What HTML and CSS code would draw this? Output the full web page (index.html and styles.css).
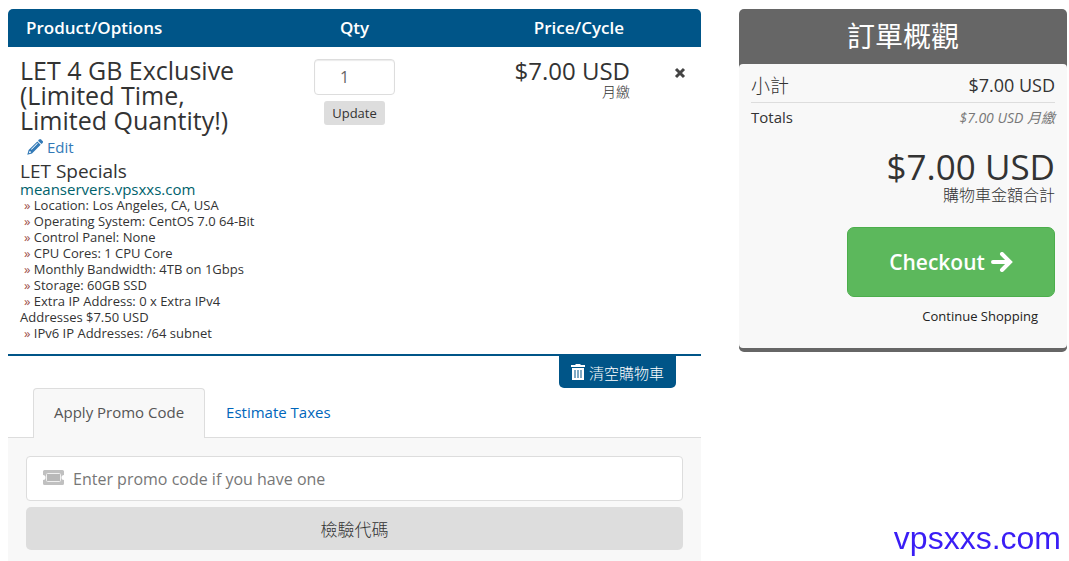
FILE: index.html
```html
<!DOCTYPE html>
<html lang="zh-Hant">
  <head>
    <meta charset="utf-8" />
    <meta name="viewport" content="width=device-width, initial-scale=1" />
    <title>Shopping Cart</title>
    <link rel="stylesheet" href="styles.css">
  </head>
  <body>
    <div class="page">
      <main class="cart">
        <!-- Cart items -->
        <table class="cart-table">
          <thead>
            <tr>
              <th class="col-product">Product/Options</th>
              <th class="col-qty">Qty</th>
              <th class="col-price">Price/Cycle</th>
              <th class="col-remove"></th>
            </tr>
          </thead>
          <tbody>
            <tr>
              <td class="col-product">
                <div class="item-title">LET 4 GB Exclusive (Limited Time, Limited Quantity!)</div>
                <a href="#" class="item-edit">
                  <svg width="16" height="16" viewBox="0 0 16 16" fill="currentColor" aria-hidden="true">
                    <path d="M11 1.700 12.200.5a1.300 1.300 0 0 1 1.800 0l1.600 1.600a1.300 1.300 0 0 1 0 1.800l-1.200 1.200z" />
                    <path fill-rule="evenodd" d="M10.300 2.400 13.700 5.800 5 14.500.3 15.800 1.600 11.100zM2.500 12l-.7 2.300 2.300-.7-.3-1.200-1-.1zM10.200 4 4 10.200l.6.6 6.200-6.200z" />
                  </svg>
                  Edit
                </a>
                <div class="item-group">LET Specials</div>
                <div class="item-domain">meanservers.vpsxxs.com</div>
                <ul class="item-options">
                  <li>Location: Los Angeles, CA, USA</li>
                  <li>Operating System: CentOS 7.0 64-Bit</li>
                  <li>Control Panel: None</li>
                  <li>CPU Cores: 1 CPU Core</li>
                  <li>Monthly Bandwidth: 4TB on 1Gbps</li>
                  <li>Storage: 60GB SSD</li>
                  <li>Extra IP Address: 0 x Extra IPv4 Addresses $7.50 USD</li>
                  <li>IPv6 IP Addresses: /64 subnet</li>
                </ul>
              </td>
              <td class="col-qty">
                <div class="qty-box">
                  <input type="text" class="qty-input" value="1" aria-label="Qty">
                  <button type="button" class="btn-update">Update</button>
                </div>
              </td>
              <td class="col-price">
                <div class="item-price">$7.00 USD</div>
                <div class="item-cycle">月繳</div>
              </td>
              <td class="col-remove">
                <button type="button" class="btn-remove" aria-label="Remove">
                  <svg width="12" height="12" viewBox="0 0 12 12" aria-hidden="true">
                    <path d="M2 2l8 8M10 2l-8 8" stroke="currentColor" stroke-width="3" />
                  </svg>
                </button>
              </td>
            </tr>
          </tbody>
        </table>

        <div class="empty-cart">
          <button type="button" class="btn-empty">
            <svg width="14" height="16" viewBox="0 0 14 16" aria-hidden="true">
              <path fill="#fff" fill-rule="evenodd" d="M4.500 0h5v1H14v2H0V1h4.500zM1 4h12v12H1zM3.500 6v8h1V6zM6.500 6v8h1V6zM9.500 6v8h1V6z" />
            </svg>
            清空購物車
          </button>
        </div>

        <!-- Promo code / taxes tabs -->
        <nav class="tabs">
          <a href="#promo" class="tab active">Apply Promo Code</a>
          <a href="#taxes" class="tab">Estimate Taxes</a>
        </nav>
        <form class="promo" id="promo">
          <label class="promo-field">
            <svg class="ticket" width="21" height="15" viewBox="0 0 21 15" aria-hidden="true">
              <path fill="#c0c0c0" d="M1.500 0h18A1.500 1.500 0 0 1 21 1.500V5a2.500 2.500 0 0 0 0 5v3.500a1.500 1.500 0 0 1-1.500 1.500h-18A1.500 1.500 0 0 1 0 13.500V10a2.500 2.500 0 0 0 0-5V1.500A1.500 1.500 0 0 1 1.500 0z" />
              <rect x="3.500" y="3.500" width="14" height="8" rx="1" fill="#b8b8b8" stroke="#f0f0f0" />
            </svg>
            <input type="text" class="promo-input" placeholder="Enter promo code if you have one" aria-label="Promo code">
          </label>
          <button type="submit" class="btn-validate">檢驗代碼</button>
        </form>
      </main>

      <!-- Order summary -->
      <aside class="summary">
        <h2 class="summary-title">訂單概觀</h2>
        <div class="summary-body">
          <div class="subtotal">
            <span class="subtotal-label">小計</span>
            <span>$7.00 USD</span>
          </div>
          <div class="recurring">
            <span>Totals</span>
            <span class="recurring-cost">$7.00 USD 月繳</span>
          </div>
          <div class="total-due">
            <div class="total-amount">$7.00 USD</div>
            <div class="total-label">購物車金額合計</div>
          </div>
          <div class="actions">
            <button type="button" class="btn-checkout">
              Checkout
              <svg width="22" height="20" viewBox="0 0 22 20" aria-hidden="true">
                <path d="M2 10h16M11 2l8 8-8 8" fill="none" stroke="currentColor" stroke-width="4" stroke-linecap="round" />
              </svg>
            </button>
            <a href="#" class="continue">Continue Shopping</a>
          </div>
        </div>
      </aside>
    </div>
    <div class="watermark">vpsxxs.com</div>
  </body>
</html>
```
FILE: styles.css
```css
* {
  box-sizing: border-box;
}

body {
  margin: 0;
  padding: 9px 2px 0 8px;
  background: #fff;
  color: #333;
  font-family: "Open Sans", "Noto Sans CJK TC", sans-serif;
  font-size: 14px;
}

a {
  text-decoration: none;
}

button,
input {
  font-family: inherit;
}

button {
  cursor: pointer;
  border: 0;
}

.page {
  display: flex;
  align-items: flex-start;
  gap: 38px;
}

.cart {
  flex: 1;
  min-width: 0;
}

/* Items table */
.cart-table {
  width: 100%;
  table-layout: fixed;
  border-collapse: separate;
  border-spacing: 0;
  border-bottom: 2px solid #058;
}

.cart-table th {
  height: 38px;
  padding: 0;
  background: #058;
  color: #fff;
  font-size: 17px;
  font-weight: 600;
  line-height: 20px;
}

.cart-table th:first-child {
  border-top-left-radius: 5px;
}

.cart-table th:last-child {
  border-top-right-radius: 5px;
}

.cart-table td {
  padding: 11px 12px 13px;
  vertical-align: top;
}

.cart-table .col-product {
  width: 38%;
  text-align: left;
}

.cart-table .col-qty {
  width: 24%;
  text-align: center;
}

.cart-table .col-price {
  text-align: right;
}

.cart-table .col-remove {
  width: 59px;
}

.cart-table th.col-product {
  padding-left: 18px;
}

.cart-table th.col-price {
  padding-right: 18px;
}

.item-title {
  font-size: 25px;
  line-height: 25px;
}

.item-edit {
  display: flex;
  align-items: center;
  gap: 4px;
  height: 28px;
  padding-left: 7px;
  color: #337ab7;
  font-size: 15px;
}

.item-group {
  font-size: 19px;
  line-height: 20px;
}

.item-domain {
  color: #00626c;
  font-size: 15px;
  line-height: 16px;
}

.item-options {
  margin: 0;
  padding: 0;
  list-style: none;
  font-size: 13px;
  line-height: 16px;
}

.item-options li::before {
  content: "» ";
  padding-left: 4px;
  color: #a0524a;
}

.qty-box {
  display: flex;
  flex-direction: column;
  align-items: center;
  gap: 6px;
  padding-top: 1px;
}

.qty-input {
  width: 81px;
  height: 36px;
  padding: 0 20px 0 0;
  border: 1px solid #ddd;
  border-radius: 4px;
  box-shadow: inset 0 1px 1px rgba(0, 0, 0, 0.08);
  color: #666;
  font-size: 16px;
  text-align: center;
}

.btn-update {
  height: 24px;
  padding: 0 8px;
  border-radius: 3px;
  background: #ddd;
  color: #333;
  font-size: 13px;
}

.item-price {
  font-size: 24px;
  line-height: 25px;
}

.item-cycle {
  font-family: "Noto Sans CJK TC", sans-serif;
  font-size: 14px;
  font-weight: 300;
  line-height: 16px;
}

.btn-remove {
  display: block;
  margin: 9px 3px 0 auto;
  padding: 0;
  background: none;
  color: #444;
}

.btn-remove svg {
  display: block;
}

.empty-cart {
  display: flex;
  justify-content: flex-end;
  padding-right: 25px;
}

.btn-empty {
  display: flex;
  align-items: center;
  gap: 4px;
  height: 32px;
  padding: 0 12px;
  border-radius: 0 0 5px 5px;
  background: #058;
  color: #fff;
  font-family: "Noto Sans CJK TC", sans-serif;
  font-size: 15px;
  font-weight: 300;
}

/* Tabs */
.tabs {
  display: flex;
  padding-left: 25px;
  border-bottom: 1px solid #ddd;
}

.tab {
  height: 49px;
  padding: 0 20px;
  border: 1px solid transparent;
  color: #06b;
  font-size: 15px;
  line-height: 46px;
}

.tab.active {
  height: 50px;
  margin-bottom: -1px;
  border-color: #ddd;
  border-bottom: 0;
  border-radius: 4px 4px 0 0;
  background: #f8f8f8;
  color: #555;
}

.promo {
  display: flex;
  flex-direction: column;
  gap: 6px;
  padding: 18px 18px 12px;
  background: #f8f8f8;
}

.promo-field {
  display: flex;
  align-items: center;
  gap: 9px;
  height: 45px;
  padding: 0 16px;
  border: 1px solid #ddd;
  border-radius: 4px;
  background: #fff;
}

.ticket {
  margin-bottom: 3px;
}

.promo-input {
  flex: 1;
  padding: 0;
  border: 0;
  background: none;
  font-size: 16px;
}

.promo-input::placeholder {
  color: #777;
}

.btn-validate {
  height: 43px;
  border-radius: 5px;
  background: #ddd;
  color: #333;
  font-family: "Noto Sans CJK TC", sans-serif;
  font-size: 17px;
  font-weight: 300;
}

/* Order summary */
.summary {
  flex: 0 0 328px;
  border-bottom: 4px solid #666;
  border-radius: 5px;
  background: #666;
}

.summary-title {
  margin: 0;
  color: #fff;
  font-size: 28px;
  font-weight: 400;
  line-height: 55px;
  text-align: center;
}

.summary-body {
  padding: 3px 12px 22px;
  border-radius: 4px;
  background: #f8f8f8;
}

.subtotal,
.recurring {
  display: flex;
  align-items: center;
  justify-content: space-between;
}

.subtotal {
  height: 36px;
  border-bottom: 1px solid #ddd;
  font-size: 18px;
}

.subtotal-label {
  font-family: "Noto Sans CJK TC", sans-serif;
  font-size: 19px;
  font-weight: 300;
}

.recurring {
  height: 27px;
  font-size: 15px;
}

.recurring-cost {
  color: #777;
  font-size: 14px;
  font-style: italic;
}

.total-due {
  padding: 19px 0 24px;
  text-align: right;
}

.total-amount {
  font-size: 35px;
  line-height: 36px;
}

.total-label {
  font-family: "Noto Sans CJK TC", sans-serif;
  font-size: 16px;
  font-weight: 300;
  line-height: 18px;
}

.actions {
  display: flex;
  flex-direction: column;
  align-items: flex-end;
}

.btn-checkout {
  display: flex;
  align-items: center;
  justify-content: center;
  gap: 6px;
  width: 208px;
  height: 70px;
  border: 1px solid #4cae4c;
  border-radius: 7px;
  background: #5cb85c;
  color: #fff;
  font-size: 21px;
  font-weight: 600;
}

.continue {
  padding: 9px 17px 0 0;
  color: #222;
  font-size: 13px;
  line-height: 20px;
}

.watermark {
  position: fixed;
  right: 8px;
  bottom: 5px;
  color: #3a1df5;
  font-family: "Liberation Sans", Arial, sans-serif;
  font-size: 32px;
  line-height: 36px;
}
```
